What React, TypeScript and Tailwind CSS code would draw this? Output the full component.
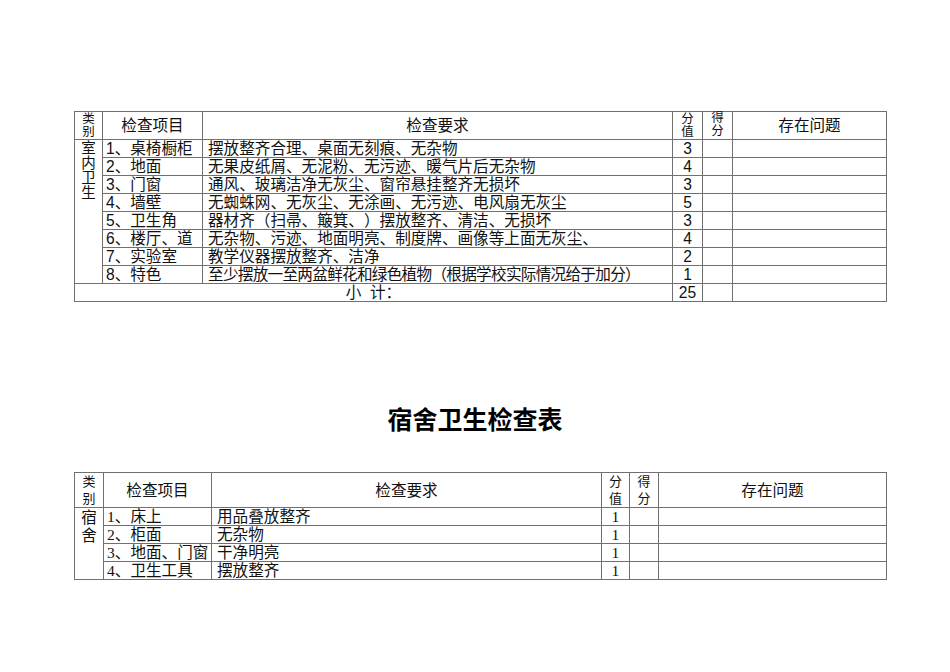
import React from "react";

const B = "border-r border-b border-[#707070]";

const rows1: [string, string, string][] = [
  ["1、桌椅橱柜", "摆放整齐合理、桌面无刻痕、无杂物", "3"],
  ["2、地面", "无果皮纸屑、无泥粉、无污迹、暖气片后无杂物", "4"],
  ["3、门窗", "通风、玻璃洁净无灰尘、窗帘悬挂整齐无损坏", "3"],
  ["4、墙壁", "无蜘蛛网、无灰尘、无涂画、无污迹、电风扇无灰尘", "5"],
  ["5、卫生角", "器材齐（扫帚、簸箕、）摆放整齐、清洁、无损坏", "3"],
  ["6、楼厅、道", "无杂物、污迹、地面明亮、制度牌、画像等上面无灰尘、", "4"],
  ["7、实验室", "教学仪器摆放整齐、洁净", "2"],
];

const rows2: [string, string, string][] = [
  ["1、床上", "用品叠放整齐", "1"],
  ["2、柜面", "无杂物", "1"],
  ["3、地面、门窗", "干净明亮", "1"],
  ["4、卫生工具", "摆放整齐", "1"],
];

function Table1() {
  return (
    <div
      className="grid w-[813px] grid-cols-[28px_100px_470px_30px_30px_154px] grid-rows-[28px_repeat(9,18px)] border-l border-t border-[#707070] text-[15.6px] leading-[17px] text-[#111] [text-spacing-trim:space-all]"
      style={{ fontFamily: '"Liberation Sans", "Noto Sans CJK SC", sans-serif' }}
    >
      <div className={`${B} flex flex-col items-center justify-center text-[12.5px] leading-[13px]`}>
        <span>类</span>
        <span>别</span>
      </div>
      <div className={`${B} flex items-center justify-center`}>检查项目</div>
      <div className={`${B} flex items-center justify-center`}>检查要求</div>
      <div className={`${B} flex flex-col items-center justify-center text-[12.5px] leading-[13px]`}>
        <span>分</span>
        <span>值</span>
      </div>
      <div className={`${B} flex flex-col items-center justify-start text-[12.5px] leading-[13px]`}>
        <span>得</span>
        <span>分</span>
      </div>
      <div className={`${B} flex items-center justify-center`}>存在问题</div>

      <div className={`${B} row-span-8 flex flex-col items-center pt-[1px] text-[14.5px] leading-[15px]`}>
        <span>室</span>
        <span>内</span>
        <span>卫</span>
        <span>生</span>
      </div>
      {rows1.map(([a, b, c]) => (
        <React.Fragment key={a}>
          <div className={`${B} flex items-center pl-[3px] whitespace-nowrap`}>{a}</div>
          <div className={`${B} flex items-center pl-[5px] whitespace-nowrap`}>{b}</div>
          <div className={`${B} flex items-center justify-center`}>{c}</div>
          <div className={B}></div>
          <div className={B}></div>
        </React.Fragment>
      ))}
      <div className={`${B} flex items-center pl-[3px] whitespace-nowrap`}>8、特色</div>
      <div className={`${B} flex items-center pl-[5px] whitespace-nowrap tracking-[-0.7px]`}>
        至少摆放一至两盆鲜花和绿色植物（根据学校实际情况给于加分）
      </div>
      <div className={`${B} flex items-center justify-center`}>1</div>
      <div className={B}></div>
      <div className={B}></div>

      <div className={`${B} col-span-3 flex items-center justify-center`}>小&nbsp;&nbsp;计：</div>
      <div className={`${B} flex items-center justify-center`}>25</div>
      <div className={B}></div>
      <div className={B}></div>
    </div>
  );
}

function Table2() {
  return (
    <div
      className="grid w-[813px] grid-cols-[29px_108px_390px_28px_29px_228px] grid-rows-[35px_repeat(4,18px)] border-l border-t border-[#707070] text-[15.6px] leading-[17px] text-[#111] [text-spacing-trim:space-all]"
      style={{ fontFamily: '"Liberation Serif", "Noto Sans CJK SC", serif' }}
    >
      <div className={`${B} flex flex-col items-center justify-center text-[13px] leading-[17px]`}>
        <span>类</span>
        <span>别</span>
      </div>
      <div className={`${B} flex items-center justify-center`}>检查项目</div>
      <div className={`${B} flex items-center justify-center`}>检查要求</div>
      <div className={`${B} flex flex-col items-center justify-center text-[13px] leading-[17px]`}>
        <span>分</span>
        <span>值</span>
      </div>
      <div className={`${B} flex flex-col items-center justify-center text-[13px] leading-[17px]`}>
        <span>得</span>
        <span>分</span>
      </div>
      <div className={`${B} flex items-center justify-center`}>存在问题</div>

      <div className={`${B} row-span-4 flex flex-col items-center pt-[1px] leading-[18px]`}>
        <span>宿</span>
        <span>舍</span>
      </div>
      {rows2.map(([a, b, c]) => (
        <React.Fragment key={a}>
          <div className={`${B} flex items-center pl-[3px] whitespace-nowrap`}>{a}</div>
          <div className={`${B} flex items-center pl-[5px] whitespace-nowrap`}>{b}</div>
          <div className={`${B} flex items-center justify-center`}>{c}</div>
          <div className={B}></div>
          <div className={B}></div>
        </React.Fragment>
      ))}
    </div>
  );
}

export default function App() {
  return (
    <div className="min-h-[672px] w-[950px] bg-white pl-[74px] pt-[111px]">
      <Table1 />
      <div
        className="mt-[99px] w-[802px] text-center text-[25px] font-bold leading-[34px] text-black"
        style={{ fontFamily: '"Noto Sans CJK SC", sans-serif' }}
      >
        宿舍卫生检查表
      </div>
      <div className="mt-[37px]">
        <Table2 />
      </div>
    </div>
  );
}
